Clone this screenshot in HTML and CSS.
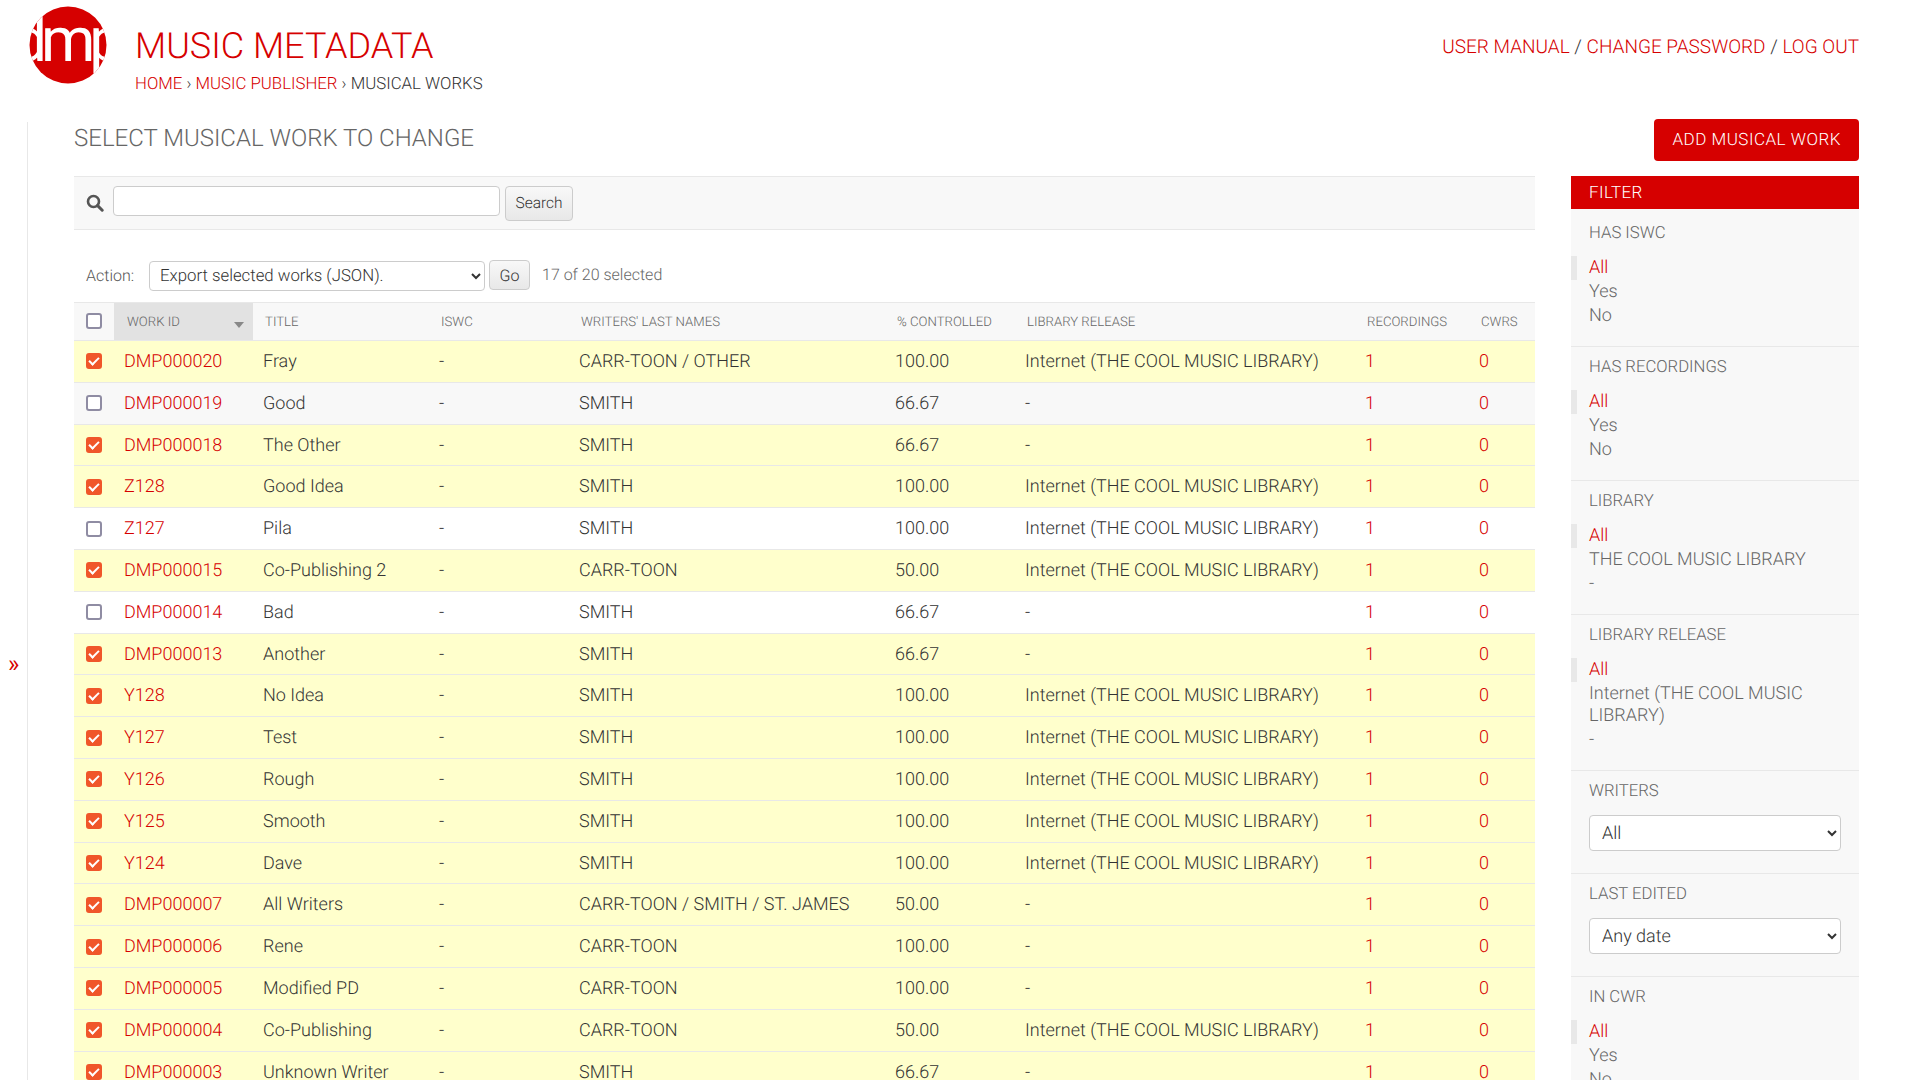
FILE: index.html
```html
<!DOCTYPE html>
<html lang="en">
<head>
  <meta charset="UTF-8" />
  <title>Select musical work to change</title>
  <link rel="stylesheet" href="styles.css">
</head>
<body>
  <header class="site-header">
    <svg class="logo" viewBox="0 0 78 78" width="78" height="78">
      <defs>
        <clipPath id="logoClip"><circle cx="39" cy="39" r="38.5"/></clipPath>
      </defs>
      <circle cx="39" cy="39" r="38.5" fill="#d60000"/>
      <text x="39" y="55" text-anchor="middle" clip-path="url(#logoClip)" class="logo-text" textLength="112" lengthAdjust="spacing">dmp</text>
    </svg>
    <div class="branding">
      <h1 class="site-title">Music Metadata</h1>
      <div class="breadcrumbs">
        <a href="#">Home</a> › <a href="#">Music Publisher</a> › Musical Works
      </div>
    </div>
    <div class="user-tools">
      <a href="#">User Manual</a> / <a href="#">Change Password</a> / <a href="#">Log Out</a>
    </div>
  </header>

  <div class="main">
    <div class="nav-side">
      <button class="nav-toggle" type="button">»</button>
    </div>
    <div class="content">
      <div class="content-head">
        <h2>Select musical work to change</h2>
        <a class="add-btn" href="#">Add Musical Work</a>
      </div>

      <div class="changelist-wrap">
        <div class="changelist">
          <form class="toolbar">
            <svg class="search-icon" viewBox="0 0 18 18" width="18" height="18">
              <circle cx="7.5" cy="7.5" r="5.5" fill="none" stroke="#555" stroke-width="2.6"/>
              <path d="M11.6 11.6 L16.2 16.2" stroke="#555" stroke-width="3" stroke-linecap="round"/>
            </svg>
            <input class="search-input" type="text">
            <button class="btn search-btn" type="button">Search</button>
          </form>

          <div class="actions">
            <label class="action-label">Action:</label>
            <select class="action-select">
              <option>Export selected works (JSON).</option>
            </select>
            <button class="btn go-btn" type="button">Go</button>
            <span class="action-counter">17 of 20 selected</span>
          </div>

          <table class="results">
            <colgroup>
              <col class="c-check"><col class="c-id"><col class="c-title"><col class="c-iswc"><col class="c-writers"><col class="c-ctrl"><col class="c-release"><col class="c-rec"><col class="c-cwrs">
            </colgroup>
            <thead>
              <tr>
                <th class="check-cell"><input type="checkbox" class="tick"></th>
                <th class="sorted">Work ID<span class="sort-arrow"></span></th>
                <th>Title</th>
                <th>ISWC</th>
                <th>Writers' Last Names</th>
                <th>% Controlled</th>
                <th>Library Release</th>
                <th>Recordings</th>
                <th>CWRs</th>
              </tr>
            </thead>
            <tbody>
              <tr class="selected"><td class="check-cell"><input type="checkbox" class="tick" checked></td><td><a href="#">DMP000020</a></td><td>Fray</td><td>-</td><td>CARR-TOON / OTHER</td><td>100.00</td><td>Internet (THE COOL MUSIC LIBRARY)</td><td><a href="#">1</a></td><td><a href="#">0</a></td></tr>
              <tr class="even"><td class="check-cell"><input type="checkbox" class="tick"></td><td><a href="#">DMP000019</a></td><td>Good</td><td>-</td><td>SMITH</td><td>66.67</td><td>-</td><td><a href="#">1</a></td><td><a href="#">0</a></td></tr>
              <tr class="selected"><td class="check-cell"><input type="checkbox" class="tick" checked></td><td><a href="#">DMP000018</a></td><td>The Other</td><td>-</td><td>SMITH</td><td>66.67</td><td>-</td><td><a href="#">1</a></td><td><a href="#">0</a></td></tr>
              <tr class="selected"><td class="check-cell"><input type="checkbox" class="tick" checked></td><td><a href="#">Z128</a></td><td>Good Idea</td><td>-</td><td>SMITH</td><td>100.00</td><td>Internet (THE COOL MUSIC LIBRARY)</td><td><a href="#">1</a></td><td><a href="#">0</a></td></tr>
              <tr><td class="check-cell"><input type="checkbox" class="tick"></td><td><a href="#">Z127</a></td><td>Pila</td><td>-</td><td>SMITH</td><td>100.00</td><td>Internet (THE COOL MUSIC LIBRARY)</td><td><a href="#">1</a></td><td><a href="#">0</a></td></tr>
              <tr class="selected"><td class="check-cell"><input type="checkbox" class="tick" checked></td><td><a href="#">DMP000015</a></td><td>Co-Publishing 2</td><td>-</td><td>CARR-TOON</td><td>50.00</td><td>Internet (THE COOL MUSIC LIBRARY)</td><td><a href="#">1</a></td><td><a href="#">0</a></td></tr>
              <tr><td class="check-cell"><input type="checkbox" class="tick"></td><td><a href="#">DMP000014</a></td><td>Bad</td><td>-</td><td>SMITH</td><td>66.67</td><td>-</td><td><a href="#">1</a></td><td><a href="#">0</a></td></tr>
              <tr class="selected"><td class="check-cell"><input type="checkbox" class="tick" checked></td><td><a href="#">DMP000013</a></td><td>Another</td><td>-</td><td>SMITH</td><td>66.67</td><td>-</td><td><a href="#">1</a></td><td><a href="#">0</a></td></tr>
              <tr class="selected"><td class="check-cell"><input type="checkbox" class="tick" checked></td><td><a href="#">Y128</a></td><td>No Idea</td><td>-</td><td>SMITH</td><td>100.00</td><td>Internet (THE COOL MUSIC LIBRARY)</td><td><a href="#">1</a></td><td><a href="#">0</a></td></tr>
              <tr class="selected"><td class="check-cell"><input type="checkbox" class="tick" checked></td><td><a href="#">Y127</a></td><td>Test</td><td>-</td><td>SMITH</td><td>100.00</td><td>Internet (THE COOL MUSIC LIBRARY)</td><td><a href="#">1</a></td><td><a href="#">0</a></td></tr>
              <tr class="selected"><td class="check-cell"><input type="checkbox" class="tick" checked></td><td><a href="#">Y126</a></td><td>Rough</td><td>-</td><td>SMITH</td><td>100.00</td><td>Internet (THE COOL MUSIC LIBRARY)</td><td><a href="#">1</a></td><td><a href="#">0</a></td></tr>
              <tr class="selected"><td class="check-cell"><input type="checkbox" class="tick" checked></td><td><a href="#">Y125</a></td><td>Smooth</td><td>-</td><td>SMITH</td><td>100.00</td><td>Internet (THE COOL MUSIC LIBRARY)</td><td><a href="#">1</a></td><td><a href="#">0</a></td></tr>
              <tr class="selected"><td class="check-cell"><input type="checkbox" class="tick" checked></td><td><a href="#">Y124</a></td><td>Dave</td><td>-</td><td>SMITH</td><td>100.00</td><td>Internet (THE COOL MUSIC LIBRARY)</td><td><a href="#">1</a></td><td><a href="#">0</a></td></tr>
              <tr class="selected"><td class="check-cell"><input type="checkbox" class="tick" checked></td><td><a href="#">DMP000007</a></td><td>All Writers</td><td>-</td><td>CARR-TOON / SMITH / ST. JAMES</td><td>50.00</td><td>-</td><td><a href="#">1</a></td><td><a href="#">0</a></td></tr>
              <tr class="selected"><td class="check-cell"><input type="checkbox" class="tick" checked></td><td><a href="#">DMP000006</a></td><td>Rene</td><td>-</td><td>CARR-TOON</td><td>100.00</td><td>-</td><td><a href="#">1</a></td><td><a href="#">0</a></td></tr>
              <tr class="selected"><td class="check-cell"><input type="checkbox" class="tick" checked></td><td><a href="#">DMP000005</a></td><td>Modified PD</td><td>-</td><td>CARR-TOON</td><td>100.00</td><td>-</td><td><a href="#">1</a></td><td><a href="#">0</a></td></tr>
              <tr class="selected"><td class="check-cell"><input type="checkbox" class="tick" checked></td><td><a href="#">DMP000004</a></td><td>Co-Publishing</td><td>-</td><td>CARR-TOON</td><td>50.00</td><td>Internet (THE COOL MUSIC LIBRARY)</td><td><a href="#">1</a></td><td><a href="#">0</a></td></tr>
              <tr class="selected"><td class="check-cell"><input type="checkbox" class="tick" checked></td><td><a href="#">DMP000003</a></td><td>Unknown Writer</td><td>-</td><td>SMITH</td><td>66.67</td><td>-</td><td><a href="#">1</a></td><td><a href="#">0</a></td></tr>
            </tbody>
          </table>
        </div>

        <aside class="filter">
          <h3 class="filter-head">Filter</h3>
          <div class="filter-group first">
            <h4>Has ISWC</h4>
            <ul>
              <li class="current"><a href="#">All</a></li>
              <li><a href="#">Yes</a></li>
              <li><a href="#">No</a></li>
            </ul>
          </div>
          <div class="filter-group">
            <h4>Has Recordings</h4>
            <ul>
              <li class="current"><a href="#">All</a></li>
              <li><a href="#">Yes</a></li>
              <li><a href="#">No</a></li>
            </ul>
          </div>
          <div class="filter-group">
            <h4>Library</h4>
            <ul>
              <li class="current"><a href="#">All</a></li>
              <li><a href="#">THE COOL MUSIC LIBRARY</a></li>
              <li><a href="#">-</a></li>
            </ul>
          </div>
          <div class="filter-group">
            <h4>Library Release</h4>
            <ul>
              <li class="current"><a href="#">All</a></li>
              <li><a href="#">Internet (THE COOL MUSIC LIBRARY)</a></li>
              <li><a href="#">-</a></li>
            </ul>
          </div>
          <div class="filter-group has-select">
            <h4>Writers</h4>
            <select class="filter-select"><option>All</option></select>
          </div>
          <div class="filter-group has-select">
            <h4>Last Edited</h4>
            <select class="filter-select"><option>Any date</option></select>
          </div>
          <div class="filter-group">
            <h4>In CWR</h4>
            <ul>
              <li class="current"><a href="#">All</a></li>
              <li><a href="#">Yes</a></li>
              <li><a href="#">No</a></li>
            </ul>
          </div>
        </aside>
      </div>
    </div>
  </div>
</body>
</html>
```

FILE: styles.css
```css
html, body {
  height: 100%;
  overflow: hidden;
}

body {
  margin: 0;
  font-family: Roboto, "Liberation Sans", sans-serif;
  font-weight: 300;
  font-size: 18px;
  color: #333;
  background-color: #fff;
  text-rendering: geometricPrecision;
}

a {
  color: #d60000;
  text-decoration: none;
}

/* header */

.site-header {
  display: flex;
  align-items: flex-start;
  height: 122px;
  padding: 6px 49px 0 29px;
  box-sizing: border-box;
}

.logo {
  flex: none;
  margin-right: 28px;
}

.logo-text {
  font-family: Roboto, sans-serif;
  font-weight: 400;
  font-size: 62px;
  fill: #fff;
}

.branding {
  flex: 1;
  padding-top: 18px;
}

.site-title {
  margin: 0;
  font-size: 36px;
  font-weight: 300;
  line-height: 44px;
  color: #d60000;
  text-transform: uppercase;
}

.breadcrumbs {
  margin-top: 5px;
  font-size: 16.8px;
  line-height: 22px;
  text-transform: uppercase;
  color: #333;
}

.user-tools {
  padding-top: 30px;
  font-size: 19px;
  line-height: 22px;
  text-transform: uppercase;
  color: #333;
}

/* page body */

.main {
  display: flex;
}

.nav-side {
  flex: none;
  width: 27px;
  min-height: 958px;
  border-right: 1px solid #e8e8e8;
}

.nav-toggle {
  display: block;
  width: 27px;
  margin-top: 529px;
  padding: 0;
  border: 0;
  background: none;
  font-family: Roboto, sans-serif;
  font-size: 24px;
  font-weight: 400;
  line-height: 26px;
  color: #d60000;
}

.content {
  flex: 1;
  min-width: 0;
  padding: 0 49px 0 46px;
}

.content-head {
  display: flex;
  justify-content: space-between;
  align-items: flex-start;
  height: 54px;
}

.content-head h2 {
  margin: 0;
  padding-top: 0;
  font-size: 24px;
  font-weight: 300;
  line-height: 32px;
  color: #666;
  text-transform: uppercase;
}

.add-btn {
  margin-top: -3px;
  padding: 1px 18px 0;
  font-size: 17px;
  font-weight: 300;
  line-height: 41px;
  letter-spacing: 0.5px;
  text-transform: uppercase;
  color: #fff;
  background-color: #d60000;
  border-radius: 4px;
}

.changelist-wrap {
  display: flex;
  align-items: flex-start;
  gap: 36px;
}

.changelist {
  flex: none;
  width: 1461px;
}

/* search + actions */

.toolbar {
  display: flex;
  align-items: center;
  height: 54px;
  box-sizing: border-box;
  padding-left: 12px;
  background-color: #f8f8f8;
  border-top: 1px solid #e8e8e8;
  border-bottom: 1px solid #e8e8e8;
}

.search-icon {
  flex: none;
  margin-right: 9px;
}

.search-input {
  width: 387px;
  height: 30px;
  box-sizing: border-box;
  margin-top: -4px;
  border: 1px solid #ccc;
  border-radius: 4px;
  background-color: #fff;
}

.btn {
  font-family: Roboto, sans-serif;
  font-size: 16px;
  font-weight: 300;
  color: #333;
  border: 1px solid #ccc;
  border-radius: 4px;
  background: linear-gradient(#f8f8f8, #e8e8e8);
  text-rendering: geometricPrecision;
}

.search-btn {
  width: 68px;
  height: 35px;
  margin-left: 5px;
  padding: 0;
  font-size: 15.5px;
}

.actions {
  display: flex;
  align-items: center;
  height: 72px;
  box-sizing: border-box;
  padding: 20px 0 0 12px;
  font-size: 16px;
  color: #555;
}

.action-label {
  width: 63px;
  margin-top: -2px;
}

.action-select {
  width: 336px;
  height: 30px;
  padding-left: 6px;
  font-family: Roboto, sans-serif;
  font-size: 16.8px;
  font-weight: 300;
  color: #333;
  background-color: #fff;
  border: 1px solid #ccc;
  border-radius: 4px;
  text-rendering: geometricPrecision;
}

.go-btn {
  width: 41px;
  height: 30px;
  margin: -2px 0 0 4px;
  padding: 0;
}

.action-counter {
  margin: -4px 0 0 12px;
  color: #666;
}

/* table */

.results {
  width: 100%;
  table-layout: fixed;
  border-collapse: separate;
  border-spacing: 0;
  border-top: 1px solid #e8e8e8;
}

.c-check { width: 40px; }
.c-id { width: 139px; }
.c-title { width: 176px; }
.c-iswc { width: 140px; }
.c-writers { width: 316px; }
.c-ctrl { width: 130px; }
.c-release { width: 340px; }
.c-rec { width: 114px; }
.c-cwrs { width: 66px; }

.results th {
  height: 38px;
  padding: 1px 12px 0;
  box-sizing: border-box;
  text-align: left;
  font-size: 13.2px;
  font-weight: 300;
  color: #666;
  text-transform: uppercase;
  white-space: nowrap;
  background-color: #f8f8f8;
  border-bottom: 1px solid #e8e8e8;
}

.results th.sorted {
  position: relative;
  padding-left: 13px;
  background-color: #e2e2e2;
}

.sort-arrow {
  position: absolute;
  right: 9px;
  top: 19px;
  border-top: 6px solid #888;
  border-left: 5px solid transparent;
  border-right: 5px solid transparent;
}

.results td {
  padding: 10px 10px 8px;
  line-height: 22.8px;
  white-space: nowrap;
  border-bottom: 1px solid #e8e8e8;
}

.results tr.even td {
  background-color: #f8f8f8;
}

.results tr.selected td {
  background-color: #ffffcc;
}

.results .check-cell {
  padding: 0 0 0 12px;
  vertical-align: middle;
}

.results th.check-cell {
  padding: 0 0 2px 12px;
}

.tick {
  appearance: none;
  display: block;
  position: relative;
  width: 16px;
  height: 16px;
  margin: 0;
  box-sizing: border-box;
  background-color: #fff;
  border: 2px solid #8f8ca3;
  border-radius: 3px;
}

.tick:checked {
  background-color: #f0562a;
  border-color: #f0562a;
}

.tick:checked::after {
  content: "";
  position: absolute;
  left: 3px;
  top: 0;
  width: 4px;
  height: 8px;
  border: solid #fff;
  border-width: 0 2px 2px 0;
  transform: rotate(45deg);
}

/* filter */

.filter {
  flex: none;
  width: 288px;
  background-color: #f8f8f8;
}

.filter-head {
  margin: 0;
  padding: 1px 18px 0;
  font-size: 17px;
  font-weight: 300;
  line-height: 32px;
  letter-spacing: 0.4px;
  color: #fff;
  text-transform: uppercase;
  background-color: #d60000;
}

.filter-group {
  padding: 11px 0 18px;
  border-bottom: 1px solid #e8e8e8;
}

.filter-group.first {
  padding-top: 15px;
}

.filter-group h4 {
  margin: 0 18px 12px;
  font-size: 16.7px;
  font-weight: 300;
  line-height: 20px;
  color: #666;
  text-transform: uppercase;
}

.filter-group ul {
  margin: 0;
  padding: 0;
  list-style: none;
}

.filter-group li {
  padding: 1px 18px 1px 12px;
  border-left: 6px solid transparent;
  line-height: 22px;
}

.filter-group li a {
  color: #666;
}

.filter-group li.current {
  border-left-color: #e8e8e8;
}

.filter-group li.current a {
  color: #d60000;
}

.has-select {
  padding-bottom: 22px;
}

.has-select h4 {
  margin-bottom: 13px;
}

.filter-select {
  display: block;
  width: 252px;
  height: 36px;
  margin: 0 18px;
  padding-left: 8px;
  font-family: Roboto, sans-serif;
  font-size: 18px;
  font-weight: 300;
  color: #333;
  background-color: #fff;
  border: 1px solid #ccc;
  border-radius: 4px;
  text-rendering: geometricPrecision;
}
```
